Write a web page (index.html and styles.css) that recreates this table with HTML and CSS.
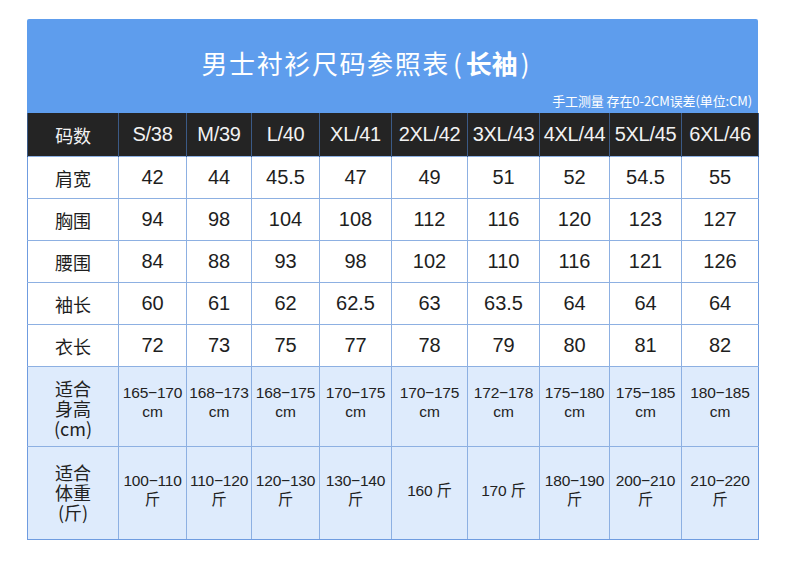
FILE: index.html
```html
<!DOCTYPE html>
<html lang="zh">
<head>
<meta charset="utf-8">
<link rel="stylesheet" href="styles.css">
</head>
<body>
<div class="sheet">
  <div class="banner">
    <h1 class="title">男士衬衫尺码参照表<b><span class="par">(</span>长袖<span class="par">)</span></b></h1>
    <p class="note">手工测量 存在0-2CM误差(单位:CM)</p>
  </div>
  <table class="sizes">
    <colgroup>
      <col class="c0"><col class="c1"><col class="c2"><col class="c3"><col class="c4"><col class="c5"><col class="c6"><col class="c7"><col class="c8"><col class="c9">
    </colgroup>
    <thead>
      <tr class="head">
        <th class="lab">码数</th><th>S/38</th><th>M/39</th><th>L/40</th><th>XL/41</th><th>2XL/42</th><th>3XL/43</th><th>4XL/44</th><th>5XL/45</th><th>6XL/46</th>
      </tr>
    </thead>
    <tbody>
      <tr class="row"><td class="lab">肩宽</td><td>42</td><td>44</td><td>45.5</td><td>47</td><td>49</td><td>51</td><td>52</td><td>54.5</td><td>55</td></tr>
      <tr class="row"><td class="lab">胸围</td><td>94</td><td>98</td><td>104</td><td>108</td><td>112</td><td>116</td><td>120</td><td>123</td><td>127</td></tr>
      <tr class="row"><td class="lab">腰围</td><td>84</td><td>88</td><td>93</td><td>98</td><td>102</td><td>110</td><td>116</td><td>121</td><td>126</td></tr>
      <tr class="row"><td class="lab">袖长</td><td>60</td><td>61</td><td>62</td><td>62.5</td><td>63</td><td>63.5</td><td>64</td><td>64</td><td>64</td></tr>
      <tr class="row"><td class="lab">衣长</td><td>72</td><td>73</td><td>75</td><td>77</td><td>78</td><td>79</td><td>80</td><td>81</td><td>82</td></tr>
      <tr class="fit height">
        <td class="lab small">适合<br>身高<br>(cm)</td>
        <td>165−170<br>cm</td><td>168−173<br>cm</td><td>168−175<br>cm</td><td>170−175<br>cm</td><td>170−175<br>cm</td><td>172−178<br>cm</td><td>175−180<br>cm</td><td>175−185<br>cm</td><td>180−185<br>cm</td>
      </tr>
      <tr class="fit weight">
        <td class="lab small">适合<br>体重<br>(斤)</td>
        <td>100−110<br>斤</td><td>110−120<br>斤</td><td>120−130<br>斤</td><td>130−140<br>斤</td><td>160 斤</td><td>170 斤</td><td>180−190<br>斤</td><td>200−210<br>斤</td><td>210−220<br>斤</td>
      </tr>
    </tbody>
  </table>
</div>
</body>
</html>
```

FILE: styles.css
```css
html, body {
  margin: 0;
  padding: 0;
  background: #ffffff;
}
body {
  padding: 19px 0 0 27px;
  font-family: "Liberation Sans", "Noto Sans CJK SC", sans-serif;
}
.sheet {
  width: 731px;
}
.banner {
  height: 94px;
  background: #5e9ded;
  display: flex;
  flex-direction: column;
  box-sizing: border-box;
  border-radius: 2px 2px 0 0;
}
.title {
  margin: 0;
  padding: 27px 50px 0 0;
  height: 34px;
  line-height: 34px;
  text-align: center;
  font-family: "Noto Sans CJK SC", sans-serif;
  font-weight: 400;
  font-size: 26px;
  letter-spacing: 1.6px;
  color: #ffffff;
}
.title b {
  font-weight: 700;
  letter-spacing: 0;
}
.title .par {
  display: inline-block;
  font-weight: 400;
  margin: 0 4px 0 3px;
}
.note {
  margin: 0;
  padding: 13px 6px 0 0;
  text-align: right;
  font-family: "Noto Sans CJK SC", sans-serif;
  font-size: 13px;
  line-height: 15px;
  color: #ffffff;
  letter-spacing: -0.1px;
}
.sizes {
  width: 731px;
  border-collapse: collapse;
  table-layout: fixed;
}
.c0 { width: 91px; }
.c1 { width: 68px; }
.c2 { width: 65px; }
.c3 { width: 68px; }
.c4 { width: 72px; }
.c5 { width: 76px; }
.c6 { width: 72px; }
.c7 { width: 70px; }
.c8 { width: 72px; }
.c9 { width: 77px; }
.sizes th, .sizes td {
  padding: 0;
  text-align: center;
  vertical-align: middle;
  white-space: nowrap;
}
.head th {
  height: 43px;
  background: #242424;
  color: #f2f2f2;
  font-weight: 400;
  font-size: 20px;
  border-left: 1px solid #3b5a86;
  border-right: 1px solid #3b5a86;
  letter-spacing: -0.3px;
}
.head th.lab {
  font-family: "Noto Sans CJK SC", sans-serif;
  font-size: 18px;
}
.row td {
  height: 41px;
  background: #ffffff;
  color: #1e1e1e;
  font-size: 20px;
  border: 1px solid #8db0e2;
}
.lab {
  font-family: "Noto Sans CJK SC", sans-serif;
  font-size: 18px;
}
.row td.lab {
  font-size: 18px;
}
.fit td {
  background: #deebfc;
  color: #222222;
  font-size: 15.5px;
  line-height: 19px;
  border: 1px solid #8db0e2;
  letter-spacing: -0.2px;
}
.fit td.small {
  font-size: 18px;
  line-height: 20px;
  letter-spacing: 0;
}
.height td {
  height: 80px;
  padding-bottom: 10px;
  box-sizing: border-box;
}
.height td.small {
  padding-bottom: 0;
  padding-top: 2px;
}
.weight td {
  height: 93px;
  padding-bottom: 6px;
  box-sizing: border-box;
  border-top: 1px solid #2456a0;
  border-bottom: 1px solid #6f9ce0;
}
.weight td.small {
  padding-bottom: 2px;
}
.sizes tbody td:first-child { border-left: 1px solid #6f9ce0; }
.sizes tbody td:last-child { border-right: 1px solid #6f9ce0; }
```
